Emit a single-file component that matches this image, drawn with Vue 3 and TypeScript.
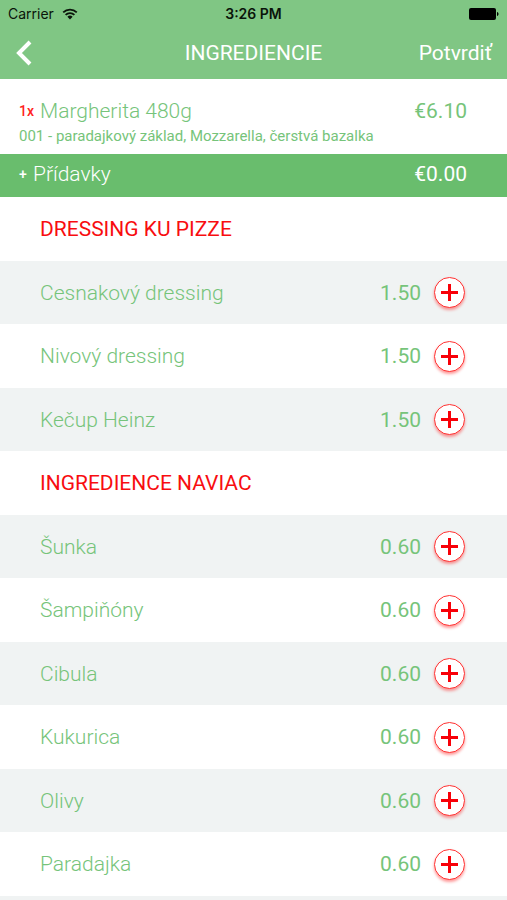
<script setup lang="ts">
import { ref } from 'vue'

interface Ingredient {
  name: string
  price: number
}

interface Group {
  title: string
  items: Ingredient[]
}

const groups: Group[] = [
  {
    title: 'DRESSING KU PIZZE',
    items: [
      { name: 'Cesnakový dressing', price: 1.5 },
      { name: 'Nivový dressing', price: 1.5 },
      { name: 'Kečup Heinz', price: 1.5 },
    ],
  },
  {
    title: 'INGREDIENCE NAVIAC',
    items: [
      { name: 'Šunka', price: 0.6 },
      { name: 'Šampiňóny', price: 0.6 },
      { name: 'Cibula', price: 0.6 },
      { name: 'Kukurica', price: 0.6 },
      { name: 'Olivy', price: 0.6 },
      { name: 'Paradajka', price: 0.6 },
    ],
  },
]

const extras = ref(0)

function add(item: Ingredient): void {
  extras.value += item.price
}
</script>

<template>
  <div class="screen">
    <header class="top">
      <div class="status">
        <span class="carrier">
          Carrier
          <svg class="wifi" viewBox="0 0 16 12" aria-hidden="true">
            <path d="M1.2 4.4a9.7 9.7 0 0 1 13.6 0M3.6 6.9a6.2 6.2 0 0 1 8.8 0" fill="none" stroke="currentColor" stroke-width="1.8" />
            <path d="M8 11.4 5.4 8.8a3.7 3.7 0 0 1 5.2 0z" fill="currentColor" />
          </svg>
        </span>
        <time class="clock">3:26 PM</time>
        <svg class="battery" viewBox="0 0 30 12" aria-hidden="true">
          <rect width="27" height="12" rx="2" />
          <path d="M28 4c2 .5 2 3.500 0 4z" />
        </svg>
      </div>
      <nav class="nav">
        <button class="back" type="button" aria-label="Späť">
          <svg viewBox="0 0 16 26" aria-hidden="true">
            <path d="M14 2 3 13l11 11" fill="none" stroke="currentColor" stroke-width="4" />
          </svg>
        </button>
        <h1 class="title">INGREDIENCIE</h1>
        <button class="confirm" type="button">Potvrdiť</button>
      </nav>
    </header>

    <section class="order">
      <div class="line">
        <span class="mark count">1x</span>
        <h2 class="name">Margherita 480g</h2>
        <span class="sum">€6.10</span>
      </div>
      <p class="details">001 - paradajkový základ, Mozzarella, čerstvá bazalka</p>
    </section>

    <section class="line extras">
      <span class="mark plus">+</span>
      <h2 class="name">Přídavky</h2>
      <span class="sum">€{{ extras.toFixed(2) }}</span>
    </section>

    <main class="list">
      <template v-for="group in groups" :key="group.title">
        <h3 class="row heading">{{ group.title }}</h3>
        <div v-for="item in group.items" :key="item.name" class="row">
          <span class="item">{{ item.name }}</span>
          <span class="price">{{ item.price.toFixed(2) }}</span>
          <button class="add" type="button" :aria-label="`Pridať ${item.name}`" @click="add(item)">
            <svg viewBox="0 0 17 17" aria-hidden="true">
              <path d="M8.500 0v17M0 8.500h17" fill="none" stroke="currentColor" stroke-width="3" />
            </svg>
          </button>
        </div>
      </template>
    </main>
  </div>
</template>

<style>
body {
  margin: 0;
}
</style>

<style scoped>
.screen {
  display: flex;
  flex-direction: column;
  height: 100vh;
  font-family: Roboto, sans-serif;
  font-size: 21px;
  line-height: 24px;
  color: #76c47a;
  background: #f0f3f3;
}

h1,
h2,
h3,
p {
  margin: 0;
  font: inherit;
}

button {
  padding: 0;
  border: 0;
  background: none;
  color: inherit;
  font: inherit;
  cursor: pointer;
}

svg {
  display: block;
}

.top {
  padding-bottom: 1px;
  background: #80c684;
}

.status {
  display: grid;
  grid-template-columns: 1fr auto 1fr;
  align-items: center;
  height: 27px;
  padding: 0 8px;
  color: #0a140a;
  font-family: Inter, sans-serif;
  font-size: 14px;
  line-height: 18px;
}

.carrier {
  display: flex;
  align-items: center;
  gap: 8px;
}

.wifi {
  width: 16px;
  height: 12px;
}

.clock {
  font-weight: 600;
}

.battery {
  justify-self: end;
  width: 30px;
  height: 12px;
  fill: #000;
}

.nav {
  display: grid;
  grid-template-columns: 1fr auto 1fr;
  align-items: center;
  height: 51px;
  padding: 0 15px;
  color: #fff;
}

.back {
  justify-self: start;
}

.back svg {
  width: 18px;
  height: 26px;
}

.confirm {
  justify-self: end;
}

.order {
  padding: 20px 0 6px;
  background: #fff;
}

.line {
  display: flex;
  align-items: center;
  padding: 0 40px 0 19px;
}

.mark {
  font-size: 14px;
  font-weight: 500;
}

.count {
  width: 21px;
  color: #f22;
}

.plus {
  width: 14px;
}

.name {
  flex: 1;
  font-weight: 300;
}

.details {
  padding: 2px 19px 0;
  font-size: 15px;
  line-height: 23px;
}

.extras {
  padding-top: 8px;
  padding-bottom: 11px;
  background: #69bd6d;
  color: #fff;
}

.list {
  flex: 1;
  display: grid;
  grid-auto-rows: 64px 63px;
  align-content: start;
  min-height: 0;
  overflow-y: auto;
  scrollbar-width: none;
}

.row {
  display: flex;
  align-items: center;
  padding: 0 42px 0 40px;
}

.row:nth-child(odd) {
  background: #fff;
}

.heading {
  color: #f80d10;
}

.item {
  flex: 1;
  font-weight: 300;
}

.add {
  display: grid;
  place-items: center;
  box-sizing: border-box;
  width: 31px;
  height: 31px;
  margin-left: 13px;
  border: 1px solid #f33;
  border-radius: 50%;
  background: #fff;
  color: #f80008;
  box-shadow: 0 2px 3px rgba(255, 0, 0, 0.4);
}

.add svg {
  width: 17px;
  height: 17px;
}
</style>
